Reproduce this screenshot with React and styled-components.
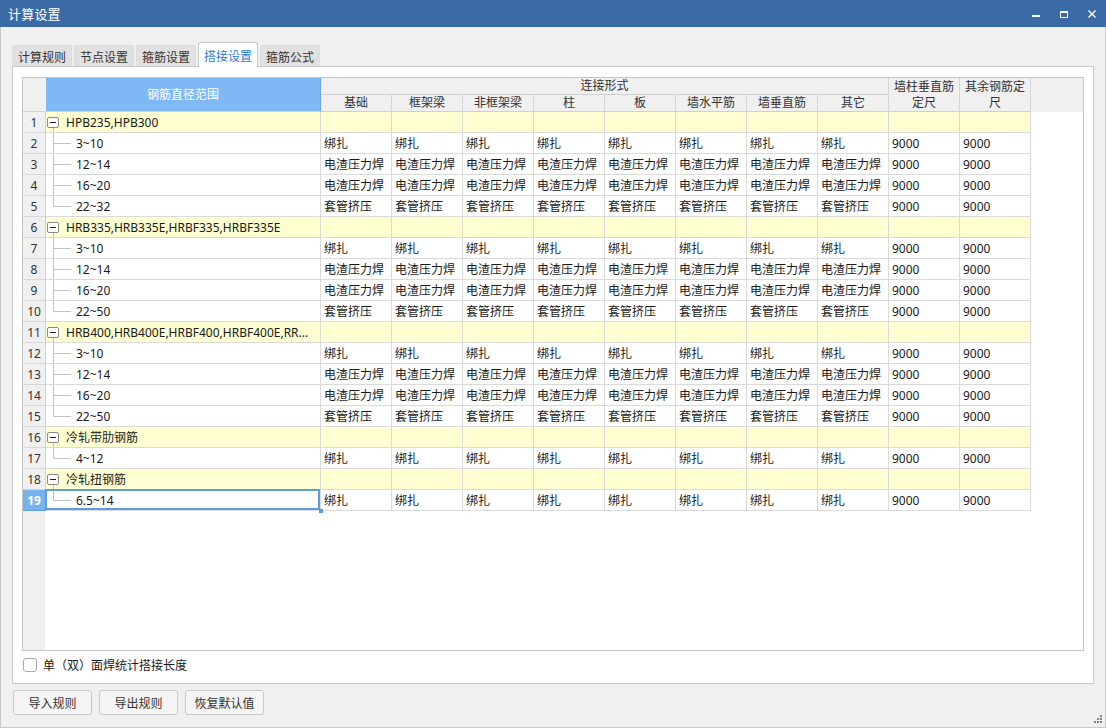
import React from 'react';
import styled, { createGlobalStyle } from 'styled-components';

const GlobalStyle = createGlobalStyle`
  html, body {
    margin: 0;
    padding: 0;
    background: #f0f0f0;
  }
  body {
    font-family: "Noto Sans", "Noto Sans CJK SC", sans-serif;
    font-size: 12px;
    color: #1a1a1a;
  }
  * {
    box-sizing: border-box;
  }
`;

const COLS = '23px 275px repeat(10, 71px)';

const METHOD = {
  bind: '绑扎',
  weld: '电渣压力焊',
  sleeve: '套管挤压',
};

const groups = [
  {
    name: 'HPB235,HPB300',
    items: [
      ['3~10', 'bind'],
      ['12~14', 'weld'],
      ['16~20', 'weld'],
      ['22~32', 'sleeve'],
    ],
  },
  {
    name: 'HRB335,HRB335E,HRBF335,HRBF335E',
    items: [
      ['3~10', 'bind'],
      ['12~14', 'weld'],
      ['16~20', 'weld'],
      ['22~50', 'sleeve'],
    ],
  },
  {
    name: 'HRB400,HRB400E,HRBF400,HRBF400E,RR...',
    items: [
      ['3~10', 'bind'],
      ['12~14', 'weld'],
      ['16~20', 'weld'],
      ['22~50', 'sleeve'],
    ],
  },
  { name: '冷轧带肋钢筋', items: [['4~12', 'bind']] },
  { name: '冷轧扭钢筋', items: [['6.5~14', 'bind']] },
];

const parts = ['基础', '框架梁', '非框架梁', '柱', '板', '墙水平筋', '墙垂直筋', '其它'];

// flatten the tree into numbered rows
const rows = [];
groups.forEach((g) => {
  rows.push({ kind: 'group', name: g.name });
  g.items.forEach(([range, m], i) => {
    rows.push({ kind: 'item', name: range, method: METHOD[m], last: i === g.items.length - 1 });
  });
});
const SELECTED = rows.length - 1;

const Window = styled.div`
  position: relative;
  width: 1106px;
  height: 728px;
  display: flex;
  flex-direction: column;
  background: #f0f0f0;
`;

const TitleBar = styled.div`
  height: 27px;
  flex: none;
  display: flex;
  align-items: center;
  padding-left: 8px;
  background: #3a6ba6;
  color: #fff;
`;

const Title = styled.div`
  flex: 1;
  font-size: 13px;
  letter-spacing: 0.2px;
`;

const WinButton = styled.div`
  width: 28px;
  height: 27px;
  display: flex;
  align-items: center;
  justify-content: center;
`;

const Body = styled.div`
  flex: 1;
  display: flex;
  flex-direction: column;
  padding: 0 11px;
  border: 1px solid #c4c7cb;
  border-top: none;
`;

const TabBar = styled.div`
  display: flex;
  align-items: flex-end;
  gap: 2px;
  padding-top: 15px;
  height: 39px;
  flex: none;
`;

const Tab = styled.div`
  position: relative;
  z-index: ${(p) => (p.$active ? 2 : 0)};
  height: ${(p) => (p.$active ? '25px' : '21px')};
  margin-bottom: ${(p) => (p.$active ? '-1px' : '0')};
  padding: ${(p) => (p.$active ? '2px 5px 0' : '1px 5px 0')};
  display: flex;
  align-items: center;
  border: 1px solid ${(p) => (p.$active ? '#c9c9c9' : '#dcdcdc')};
  border-bottom: none;
  border-radius: 3px 3px 0 0;
  background: ${(p) => (p.$active ? '#fff' : '#e1e1e1')};
  color: ${(p) => (p.$active ? '#2a7bd6' : '#333')};
  font-size: 12px;
`;

const Panel = styled.div`
  position: relative;
  z-index: 1;
  height: 618px;
  flex: none;
  display: flex;
  flex-direction: column;
  padding: 10px 9px 0;
  border: 1px solid #c9c9c9;
  background: #fff;
`;

const Grid = styled.div`
  height: 574px;
  flex: none;
  border: 1px solid #c6c6c6;
  background: linear-gradient(to right, #f0f0f0 0 22px, #fff 22px);
  overflow: hidden;
`;

const HeaderGrid = styled.div`
  display: grid;
  grid-template-columns: ${COLS};
  grid-template-rows: 17px 17px;
  background: #f0f0f0;
`;

const HeadCell = styled.div`
  grid-column: ${(p) => p.$col};
  grid-row: ${(p) => p.$row};
  display: flex;
  align-items: center;
  justify-content: center;
  text-align: center;
  padding: 0 2px;
  line-height: 16px;
  border-right: 1px solid ${(p) => (p.$accent ? '#6aa5e4' : '#d6d6d6')};
  border-bottom: 1px solid #d0d0d0;
  background: ${(p) => (p.$accent ? '#7fb9f5' : 'transparent')};
  color: ${(p) => (p.$accent ? '#fff' : '#333')};
`;

const Corner = styled.div`
  grid-column: 1;
  grid-row: 1 / 3;
  border-bottom: 1px solid #d0d0d0;
`;

const Row = styled.div`
  display: grid;
  grid-template-columns: ${COLS};
  height: 21px;
`;

const NumCell = styled.div`
  display: flex;
  align-items: center;
  justify-content: center;
  border-right: 1px solid ${(p) => (p.$selected ? '#5f9de0' : '#d2d2d2')};
  border-bottom: 1px solid ${(p) => (p.$selected ? '#5f9de0' : '#d8d8d8')};
  background: ${(p) => (p.$selected ? '#78b2ee' : '#f0f0f0')};
  color: ${(p) => (p.$selected ? '#fff' : '#333')};
  font-weight: ${(p) => (p.$selected ? 700 : 400)};
`;

const Cell = styled.div`
  display: flex;
  align-items: center;
  padding-left: 3px;
  white-space: nowrap;
  overflow: hidden;
  border-right: 1px solid #dadada;
  border-bottom: 1px solid #dadada;
  background: ${(p) => (p.$group ? '#ffffd2' : '#fff')};
`;

const NameCell = styled(Cell)`
  position: relative;
  overflow: visible;
  padding-left: 0;

  &::after {
    content: '';
    display: ${(p) => (p.$selected ? 'block' : 'none')};
    position: absolute;
    left: -1px;
    top: -1px;
    right: 0;
    bottom: 0;
    border: 2px solid #5b9be0;
    pointer-events: none;
  }

  &::before {
    content: '';
    display: ${(p) => (p.$selected ? 'block' : 'none')};
    position: absolute;
    right: -3px;
    bottom: -3px;
    width: 4px;
    height: 4px;
    background: #5b9be0;
    z-index: 2;
  }
`;

const NameText = styled.span`
  overflow: hidden;
  text-overflow: ellipsis;
  white-space: nowrap;
`;

const Footer = styled.div`
  height: 32px;
  display: flex;
  align-items: center;
  gap: 6px;
  padding: 0 0 4px 1px;
  color: #1a1a1a;
`;

const CheckBox = styled.span`
  width: 14px;
  height: 14px;
  border: 1px solid #a9a9a9;
  border-radius: 3px;
  background: #fff;
`;

const ButtonBar = styled.div`
  display: flex;
  gap: 7px;
  padding-top: 6px;
  padding-left: 1px;
`;

const Button = styled.button`
  width: 79px;
  height: 25px;
  border: 1px solid #c6c9cd;
  border-radius: 3px;
  background: #f5f5f5;
  font-family: inherit;
  font-size: 12px;
  color: #333;
  padding: 0;
`;

const Grip = styled.svg`
  position: absolute;
  right: 3px;
  bottom: 4px;
`;

function TreeMark({ kind, last }) {
  if (kind === 'group') {
    return (
      <svg width="20" height="20" style={{ flex: 'none' }}>
        <rect x="1.5" y="5.5" width="11" height="10" rx="1.5" fill="#fff" stroke="#8a8a8a" />
        <line x1="4" y1="10.5" x2="10" y2="10.5" stroke="#222" />
        <line x1="7.5" y1="16" x2="7.5" y2="20" stroke="#c2c2c2" />
      </svg>
    );
  }
  return (
    <svg width="30" height="20" style={{ flex: 'none' }}>
      <line x1="7.5" y1="0" x2="7.5" y2={last ? 10.5 : 20} stroke="#c2c2c2" />
      <line x1="7.5" y1="10.5" x2="25" y2="10.5" stroke="#c2c2c2" />
    </svg>
  );
}

export default function App() {
  return (
    <Window>
      <GlobalStyle />
      <TitleBar>
        <Title>计算设置</Title>
        <WinButton>
          <svg width="10" height="10">
            <rect x="1" y="6" width="8" height="2" fill="#fff" />
          </svg>
        </WinButton>
        <WinButton>
          <svg width="10" height="10">
            <rect x="1.5" y="2.5" width="7" height="6" fill="none" stroke="#fff" />
            <rect x="1" y="2" width="8" height="2" fill="#fff" />
          </svg>
        </WinButton>
        <WinButton>
          <svg width="10" height="10">
            <path d="M1.5 1.5 L8.5 8.5 M8.5 1.5 L1.5 8.5" stroke="#fff" strokeWidth="1.4" />
          </svg>
        </WinButton>
      </TitleBar>

      <Body>
        <TabBar>
          <Tab>计算规则</Tab>
          <Tab>节点设置</Tab>
          <Tab>箍筋设置</Tab>
          <Tab $active>搭接设置</Tab>
          <Tab>箍筋公式</Tab>
        </TabBar>

        <Panel>
          <Grid>
            <HeaderGrid>
              <Corner />
              <HeadCell $col="2" $row="1 / 3" $accent>
                钢筋直径范围
              </HeadCell>
              <HeadCell $col="3 / 11" $row="1">
                连接形式
              </HeadCell>
              <HeadCell $col="11" $row="1 / 3">
                墙柱垂直筋定尺
              </HeadCell>
              <HeadCell $col="12" $row="1 / 3">
                其余钢筋定尺
              </HeadCell>
              {parts.map((p, i) => (
                <HeadCell key={p} $col={String(i + 3)} $row="2">
                  {p}
                </HeadCell>
              ))}
            </HeaderGrid>

            {rows.map((r, i) => {
              const group = r.kind === 'group';
              const selected = i === SELECTED;
              return (
                <Row key={i}>
                  <NumCell $selected={selected}>{i + 1}</NumCell>
                  <NameCell $group={group} $selected={selected}>
                    <TreeMark kind={r.kind} last={r.last} />
                    <NameText>{r.name}</NameText>
                  </NameCell>
                  {parts.map((p) => (
                    <Cell key={p} $group={group}>
                      {group ? '' : r.method}
                    </Cell>
                  ))}
                  <Cell $group={group}>{group ? '' : '9000'}</Cell>
                  <Cell $group={group}>{group ? '' : '9000'}</Cell>
                </Row>
              );
            })}
          </Grid>

          <Footer>
            <CheckBox />
            <span>单（双）面焊统计搭接长度</span>
          </Footer>
        </Panel>

        <ButtonBar>
          <Button>导入规则</Button>
          <Button>导出规则</Button>
          <Button>恢复默认值</Button>
        </ButtonBar>
      </Body>

      <Grip width="9" height="9">
        {[
          [6, 0],
          [3, 3],
          [6, 3],
          [0, 6],
          [3, 6],
          [6, 6],
        ].map(([x, y]) => (
          <rect key={`${x}-${y}`} x={x} y={y} width="2" height="2" fill="#808080" />
        ))}
      </Grip>
    </Window>
  );
}
